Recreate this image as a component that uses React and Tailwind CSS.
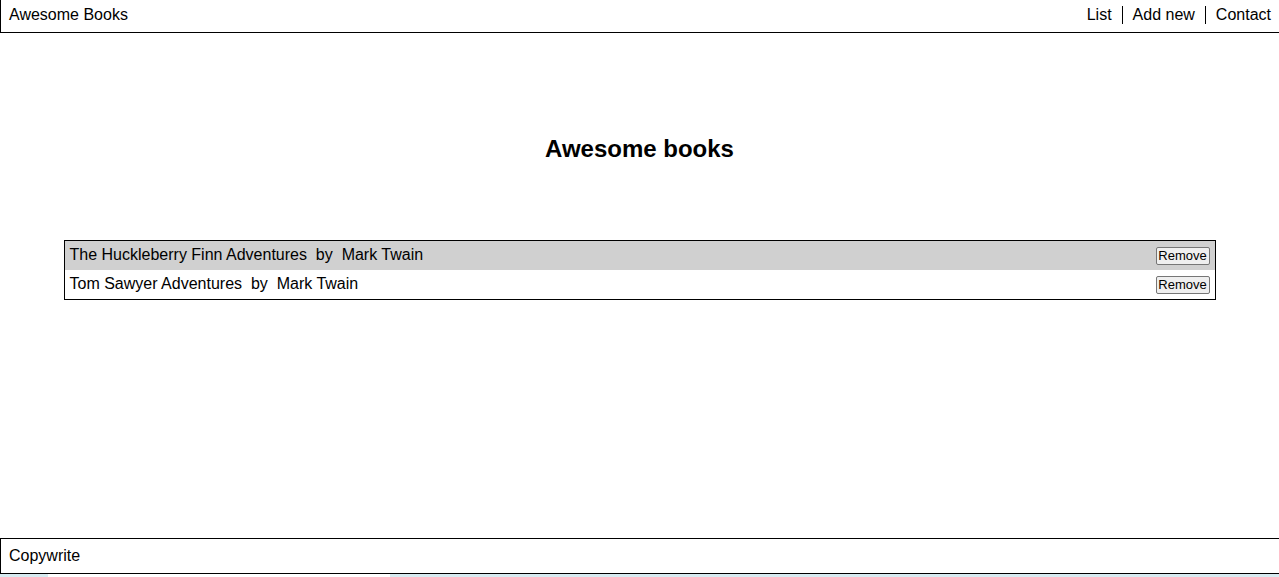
import React from 'react';

const books = [
  { title: 'The Huckleberry Finn Adventures', author: 'Mark Twain' },
  { title: 'Tom Sawyer Adventures', author: 'Mark Twain' },
];

const App = () => {
  return (
    <div className="h-[577px] w-[1279px] overflow-hidden flex flex-col bg-white text-black font-['Liberation_Sans',Arial,sans-serif]">
      {/* header bar */}
      <header className="h-[33px] shrink-0 flex items-center justify-between border-l border-b border-black pl-2 pr-2 pb-[2px] text-base">
        <span>Awesome Books</span>
        <nav className="flex items-center">
          <a className="pr-[10px] leading-[18px]">List</a>
          <a className="px-[10px] leading-[18px] border-l border-black">Add new</a>
          <a className="pl-[10px] leading-[18px] border-l border-black">Contact</a>
        </nav>
      </header>

      <main className="flex-1 flex flex-col items-center">
        <h2 className="mt-[100px] text-2xl font-bold">Awesome books</h2>
        <ul className="mt-[75px] w-[1152px] border border-black">
          {books.map((b, i) => (
            <li
              key={b.title}
              className={`h-[29px] flex items-center justify-between pl-[5px] pr-[5px] ${i % 2 === 0 ? 'bg-[#d0d0d0]' : 'bg-white'}`}
            >
              <span className="whitespace-pre mb-[2px]">{`${b.title}  by  ${b.author}`}</span>
              <button className="h-[18px] w-[54px] text-[13px] leading-none bg-[#efefef] border border-[#767676] rounded-[2px]">
                Remove
              </button>
            </li>
          ))}
        </ul>
      </main>

      {/* footer */}
      <footer className="h-[36px] shrink-0 flex items-center border-l border-t border-b border-black pl-2 text-base">
        Copywrite
      </footer>
      <div className="h-[3px] shrink-0 flex bg-[#d7ebf1]">
        <div className="w-[48px]" />
        <div className="w-[342px] bg-white" />
      </div>
    </div>
  );
};

export default App;
